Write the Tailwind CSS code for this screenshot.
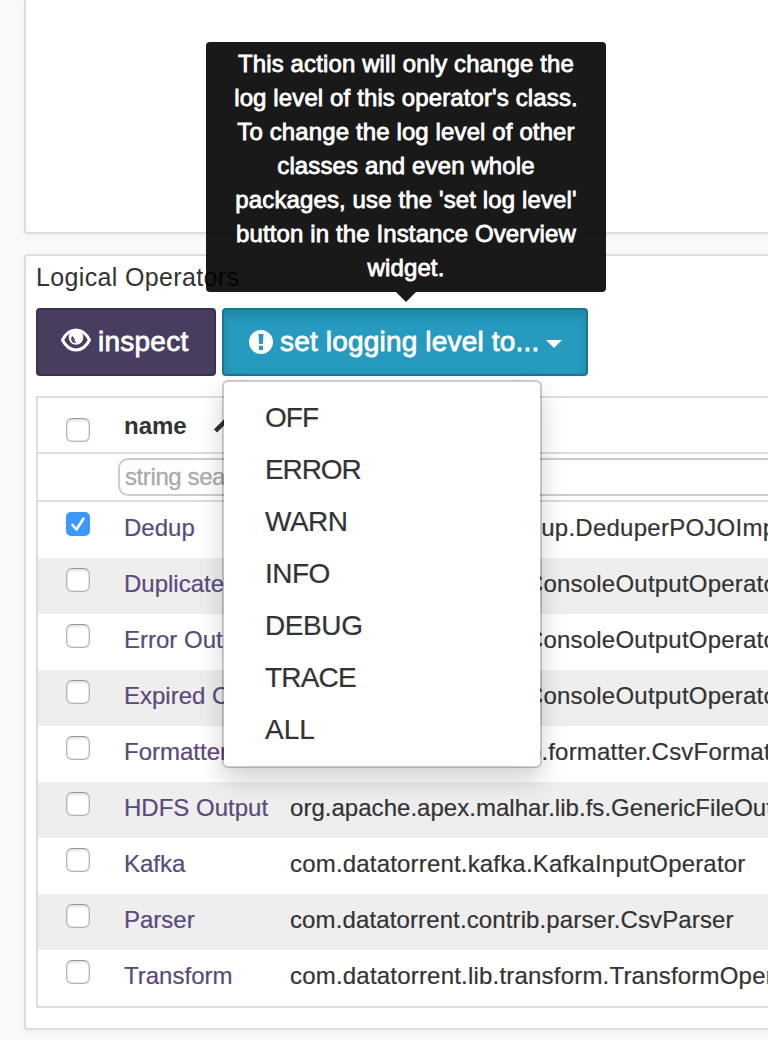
<!DOCTYPE html>
<html lang="en">
<head>
<meta charset="utf-8">
<title>Logical Operators</title>
<script src="https://cdn.jsdelivr.net/npm/@tailwindcss/browser@4"></script>
</head>
<body class="h-[1040px] w-[768px] overflow-hidden bg-[#fafafa] font-['Liberation_Sans',Arial,sans-serif] text-2xl text-[#333]">
<div class="h-[1040px] overflow-hidden pl-6">
  <section class="h-[234px] w-[800px] rounded-b border-2 border-t-0 border-[#ddd] bg-white shadow-[0_2px_6px_rgba(0,0,0,0.05)]"></section>

  <section class="mt-5 h-[776px] w-[800px] rounded border-2 border-[#ddd] bg-white pl-2.5 shadow-[0_2px_6px_rgba(0,0,0,0.05)]">
    <h2 class="h-13 pt-[3px] text-[25px] leading-9 tracking-[0.35px]">Logical Operators</h2>

    <div class="flex gap-1.5 text-[28px] text-white [-webkit-text-stroke:0.8px_white]">
      <button class="flex h-[68px] w-[180px] items-center rounded border-2 border-[#3b314f] bg-[#483c5f] pl-[23px] tracking-[0.25px]">
        <svg class="mr-[7px] -mt-1 h-6 w-[30px]" viewBox="0 0 30 24" fill="none"><path d="M1.500 12C4.500 6.200 9 2 15 2S25.500 6.200 28.500 12C25.500 17.800 21 22 15 22S4.500 17.800 1.500 12Z" stroke="#fff" stroke-width="3"/><circle cx="15" cy="9.500" r="7.300" fill="#fff"/><path d="M11.700 8.500c-2.200 2.800 0 6 3 5.600M12 9.500c.2 1.500.9 2.300 1.800 2.700" stroke="#483c5f" stroke-width="1.500"/></svg>
        <span>inspect</span>
      </button>
      <div class="relative">
        <button class="flex h-[68px] w-[366px] items-center rounded border-2 border-[#1b7592] bg-[#269abf] pl-[25px] tracking-[0.18px] shadow-[inset_0_6px_10px_rgba(0,0,0,0.125)]">
          <svg class="mr-[7px] size-6" viewBox="0 0 24 24"><circle cx="12" cy="12" r="12" fill="#fff"/><path d="M9.500 4h5l-.6 10h-3.800zM10 15.700h4v4.300h-4z" fill="#269abf"/></svg>
          <span>set logging level to...</span>
          <span class="ml-[7px] mt-1 border-x-8 border-t-8 border-x-transparent border-t-white"></span>
        </button>

        <div class="absolute bottom-[84px] left-[-16px] z-20 w-[400px] rounded bg-black/90 px-4 pb-[7px] pt-[5px] text-center text-2xl leading-[34px] tracking-[0.12px]">
          This action will only change the<br>log level of this operator's class.<br>To change the log level of other<br>classes and even whole<br>packages, use the 'set log level'<br>button in the Instance Overview<br>widget.
          <span class="absolute left-[190px] top-full border-x-10 border-t-10 border-x-transparent border-t-black/90"></span>
        </div>

        <ul class="absolute left-0 top-[72px] z-10 w-[320px] rounded-md border-2 border-black/20 bg-white bg-clip-padding py-2.5 pl-[41px] text-[28px] leading-[52px] text-[#333] shadow-[0_12px_24px_rgba(0,0,0,0.175)] [-webkit-text-stroke:0.2px_#333]">
          <li class="tracking-[-1px]">OFF</li><li class="tracking-[-1.1px]">ERROR</li><li class="tracking-[-0.5px]">WARN</li><li class="tracking-[-0.5px]">INFO</li><li class="tracking-[-0.4px]">DEBUG</li><li class="tracking-[-0.8px]">TRACE</li><li>ALL</li>
        </ul>
      </div>
    </div>

    <div class="mt-5 h-[612px] border-2 border-[#ddd]">
      <div class="flex h-14 items-center border-b-2 border-[#ddd] pl-7 font-bold">
        <span class="mt-2.5 size-6 shrink-0 rounded-md border border-[#b4b4b4] border-t-[#999] bg-white shadow-[inset_0_2px_2px_#e4e4e4,inset_0_0_0_0.5px_#ccc]"></span>
        <span class="ml-[34px] mt-0.5">name</span>
        <svg class="ml-[27px] h-4 w-6" viewBox="0 0 24 16" fill="none" stroke="#333" stroke-width="4.500"><path d="M1.500 14 12 3.500 22.500 14"/></svg>
      </div>
      <div class="h-12 border-b-2 border-[#ddd] pl-20 pt-1">
        <div class="h-[38px] rounded-[10px] border-2 border-[#ccc] pl-[5px] leading-[33px] tracking-[-0.4px] text-[#aaa] [-webkit-text-stroke:0.3px_#aaa]">string search</div>
      </div>
      <div id="rows" class="whitespace-nowrap leading-[52px] [-webkit-text-stroke:0.2px]"></div>
    </div>
  </section>
</div>
<script>
const operators = [
  ['Dedup', 'com.datatorrent.lib.dedup.DeduperPOJOImpl', 'tracking-[0.25px]'],
  ['Duplicate Output', 'com.datatorrent.lib.io.ConsoleOutputOperator', 'tracking-[0.22px]'],
  ['Error Output', 'com.datatorrent.lib.io.ConsoleOutputOperator', 'tracking-[0.22px]'],
  ['Expired Output', 'com.datatorrent.lib.io.ConsoleOutputOperator', 'tracking-[0.22px]'],
  ['Formatter', 'com.datatorrent.contrib.formatter.CsvFormatter', 'tracking-[0.2px]'],
  ['HDFS Output', 'org.apache.apex.malhar.lib.fs.GenericFileOutputOperator', 'tracking-[0.03px]'],
  ['Kafka', 'com.datatorrent.kafka.KafkaInputOperator', 'tracking-[0.18px]'],
  ['Parser', 'com.datatorrent.contrib.parser.CsvParser', 'tracking-[0.12px]'],
  ['Transform', 'com.datatorrent.lib.transform.TransformOperator', 'tracking-[0.2px]'],
];
const empty = '<span class="mt-2.5 size-6 shrink-0 rounded-md border border-[#b4b4b4] border-t-[#999] bg-white shadow-[inset_0_2px_2px_#e4e4e4,inset_0_0_0_0.5px_#ccc]"></span>';
const checked = '<span class="mt-2.5 size-6 shrink-0 rounded-[5px] bg-[#3b99fc]"><svg viewBox="0 0 24 24" fill="none" stroke="#fff" stroke-width="2.600" stroke-linecap="round" stroke-linejoin="round"><path d="M6.500 13 10.500 17.500 17.500 6.500"/></svg></span>';
document.getElementById('rows').innerHTML = operators.map(([name, cls, tracking], i) =>
  `<div class="flex h-14 pl-7 even:bg-[#eee]">${i ? empty : checked}<span class="ml-[34px] w-[166px] shrink-0 text-[#5a4a7c]">${name}</span><span class="${tracking}">${cls}</span></div>`).join('');
</script>
</body>
</html>
